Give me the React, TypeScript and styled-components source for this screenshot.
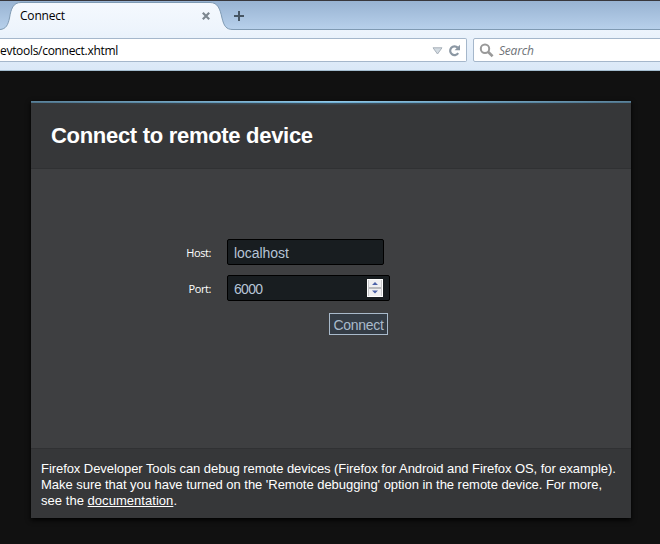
import React from 'react';
import styled, { createGlobalStyle } from 'styled-components';

const GlobalStyle = createGlobalStyle`
  *, *::before, *::after { box-sizing: border-box; }
  body { margin: 0; background: #111; font-family: "Liberation Sans", Arial, sans-serif; }
`;

const Window = styled.div`
  width: 660px;
  height: 544px;
  overflow: hidden;
  background: #111;
  display: flex;
  flex-direction: column;
`;

const TabStrip = styled.div`
  position: relative;
  flex: none;
  height: 30px;
  display: flex;
  border-top: 1px solid #38373c;
  border-bottom: 1px solid #7f9ab3;
  background: linear-gradient(#98b3d2, #b7d0eb);
`;

const TabShape = styled.svg`
  position: absolute;
  left: 0;
  top: 0;
  width: 240px;
  height: 30px;
`;

const Tab = styled.div`
  position: relative;
  width: 231px;
  padding: 0 20px;
  display: flex;
  align-items: center;
  justify-content: space-between;
  font: 12px/28px "Open Sans", sans-serif;
  color: #000;
`;

const TabLabel = styled.span`
  padding-top: 2px;
  letter-spacing: -0.2px;
`;

const CloseIcon = styled.svg`
  width: 10px;
  height: 10px;
  margin: 1px 0 0;
`;

const NewTabIcon = styled.svg`
  position: relative;
  width: 12px;
  height: 12px;
  margin: 9px 0 0 2px;
`;

const Toolbar = styled.div`
  flex: none;
  height: 41px;
  display: flex;
  align-items: flex-start;
  gap: 6px;
  padding-top: 8px;
  border-bottom: 1px solid #a3bccf;
  background: linear-gradient(#edf4fc, #dae8f7);
`;

const Field = styled.div<{ $width: number }>`
  width: ${(p) => p.$width}px;
  flex: none;
  height: 24px;
  display: flex;
  align-items: center;
  background: #fff;
  border: 1px solid #a5b7cb;
  border-radius: 2px;
`;

const UrlField = styled(Field)`
  border-left: 0;
  border-radius: 0 2px 2px 0;
  padding-right: 5px;
`;

const Url = styled.span`
  flex: 1;
  padding-top: 2px;
  font: 12px/22px "Open Sans", sans-serif;
  letter-spacing: -0.3px;
  color: #000;
`;

const DropIcon = styled.svg`
  width: 11px;
  height: 8px;
  margin: 1px 5px 0 0;
`;

const ReloadIcon = styled.svg`
  width: 13px;
  height: 13px;
`;

const SearchIcon = styled.svg`
  width: 15px;
  height: 15px;
  margin: 0 5px 0 5px;
`;

const Placeholder = styled.span`
  padding-top: 2px;
  font: italic 12px/22px "Open Sans", sans-serif;
  letter-spacing: -0.2px;
  color: #6e7277;
`;

const Page = styled.main`
  flex: 1;
  padding: 30px 29px 0 31px;
`;

const Panel = styled.section`
  width: 600px;
  height: 417px;
  display: flex;
  flex-direction: column;
  background: #3e3f41;
  box-shadow: 0 2px 5px #000;
`;

const Header = styled.header`
  height: 68px;
  border-bottom: 1px solid #303133;
  background:
    linear-gradient(90deg, #5a8199, #92c9e8 50%, #5a8199) 0 0 / 100% 1px no-repeat,
    linear-gradient(90deg, #4e7289, #6fb0d6 50%, #4e7289) 0 1px / 100% 1px no-repeat,
    linear-gradient(90deg, #363739, #3f5361 50%, #363739) 0 2px / 100% 1px no-repeat,
    linear-gradient(90deg, #363739, #3a444c 50%, #363739) 0 3px / 100% 1px no-repeat,
    #363739;
`;

const Title = styled.h1`
  margin: 0;
  padding: 22px 0 0 20px;
  font-size: 22px;
  line-height: 26px;
  font-weight: bold;
  letter-spacing: -0.3px;
  color: #fff;
`;

const Form = styled.div`
  flex: 1;
  padding-top: 70px;
`;

const Row = styled.div`
  display: flex;
  align-items: center;
  height: 26px;
  margin-bottom: 10px;
`;

const Label = styled.label`
  width: 180px;
  margin: 2px 16px 0 0;
  text-align: right;
  font: 11px/14px "Open Sans", sans-serif;
  letter-spacing: -0.4px;
  color: #fff;
`;

const Input = styled.div<{ $width: number }>`
  width: ${(p) => p.$width}px;
  height: 26px;
  display: flex;
  align-items: center;
  justify-content: space-between;
  padding: 0 6px;
  border: 1px solid #000;
  border-radius: 2px;
  background: #181d20;
  color: #b6c4d6;
  font-size: 14px;
  line-height: 24px;
`;

const Value = styled.span<{ $tracking: number }>`
  padding-top: 2px;
  letter-spacing: ${(p) => p.$tracking}px;
`;

const Spinner = styled.svg`
  width: 16px;
  height: 18px;
`;

const ConnectButton = styled.button`
  display: block;
  width: 59px;
  height: 22px;
  margin: 12px 0 0 298px;
  padding: 1px 0 0;
  border: 1px solid #a9bacb;
  background: #343c45;
  color: #a9bacb;
  font: 14px/20px "Liberation Sans", Arial, sans-serif;
  letter-spacing: -0.3px;
  white-space: nowrap;
`;

const Footer = styled.footer`
  height: 70px;
  padding: 12px 0 0 10px;
  border-top: 1px solid #303133;
  background: #363739;
  color: #fff;
  font-size: 13px;
  line-height: 16px;
  white-space: nowrap;
`;

const Line = styled.div<{ $tracking: number }>`
  letter-spacing: ${(p) => p.$tracking}px;
`;

const DocLink = styled.a`
  color: #fff;
  text-decoration: underline;
`;

export default function App() {
  return (
    <>
      <GlobalStyle />
      <Window>
        <TabStrip>
          <TabShape viewBox="0 0 240 30">
            <defs>
              <linearGradient id="tab" x1="0" y1="0" x2="0" y2="1">
                <stop offset="0" stopColor="#f5f9fe" />
                <stop offset="1" stopColor="#edf4fc" />
              </linearGradient>
            </defs>
            <path
              d="M0 28.5C6 28 8 24 9.5 17C11 8 13 1.5 21 1.5H210C218 1.5 220 8 222 17C224 25 226 28.5 233 28.5V30H0Z"
              fill="url(#tab)"
            />
            <path
              d="M0 28.5C6 28 8 24 9.5 17C11 8 13 1.5 21 1.5H210C218 1.5 220 8 222 17C224 25 226 28.5 233 28.5"
              fill="none"
              stroke="#7f9ab3"
            />
          </TabShape>
          <Tab>
            <TabLabel>Connect</TabLabel>
            <CloseIcon viewBox="0 0 10 10">
              <path d="M1.8 1.8L8.2 8.2M8.2 1.8L1.8 8.2" stroke="#7d8790" strokeWidth="2.2" />
            </CloseIcon>
          </Tab>
          <NewTabIcon viewBox="0 0 12 12">
            <path d="M6 1V11M1 6H11" stroke="#465563" strokeWidth="2" />
          </NewTabIcon>
        </TabStrip>
        <Toolbar>
          <UrlField $width={467}>
            <Url>evtools/connect.xhtml</Url>
            <DropIcon viewBox="0 0 11 8">
              <path d="M1 .8H10L5.5 7Z" fill="#d3dbe2" stroke="#a8b1ba" />
            </DropIcon>
            <ReloadIcon viewBox="0 0 13 13">
              <path d="M10.2 9.2A4.4 4.4 0 1 1 9.7 3.6" fill="none" stroke="#8b97a3" strokeWidth="2.2" />
              <path d="M12 .8V6.2H6.6Z" fill="#8b97a3" />
            </ReloadIcon>
          </UrlField>
          <Field $width={190}>
            <SearchIcon viewBox="0 0 15 15">
              <circle cx="6" cy="5.7" r="4.2" fill="none" stroke="#999" strokeWidth="2" />
              <path d="M9 8.8L13.6 13.2" stroke="#999" strokeWidth="2.6" />
            </SearchIcon>
            <Placeholder>Search</Placeholder>
          </Field>
        </Toolbar>
        <Page>
          <Panel>
            <Header>
              <Title>Connect to remote device</Title>
            </Header>
            <Form>
              <Row>
                <Label>Host:</Label>
                <Input $width={157}>
                  <Value $tracking={-0.05}>localhost</Value>
                </Input>
              </Row>
              <Row>
                <Label>Port:</Label>
                <Input $width={163}>
                  <Value $tracking={-0.7}>6000</Value>
                  <Spinner viewBox="0 0 16 18">
                    <path d="M0 0H16V18H0Z" fill="#fff" />
                    <path d="M1 1H15V8H1ZM1 10H15V17H1Z" fill="#efeff1" />
                    <path d="M1 8H15V10H1Z" fill="#b9babd" />
                    <path d="M1.5 1V17M14.5 1V17" stroke="#c9cacc" />
                    <path d="M5 6H11L8 3ZM5 11.5H11L8 14.5Z" fill="#4c62a8" />
                  </Spinner>
                </Input>
              </Row>
              <ConnectButton>Connect</ConnectButton>
            </Form>
            <Footer>
              <Line $tracking={-0.06}>
                Firefox Developer Tools can debug remote devices (Firefox for Android and Firefox OS, for example).
              </Line>
              <Line $tracking={-0.035}>
                Make sure that you have turned on the 'Remote debugging' option in the remote device. For more,
              </Line>
              <Line $tracking={0.04}>
                see the <DocLink>documentation</DocLink>.
              </Line>
            </Footer>
          </Panel>
        </Page>
      </Window>
    </>
  );
}
